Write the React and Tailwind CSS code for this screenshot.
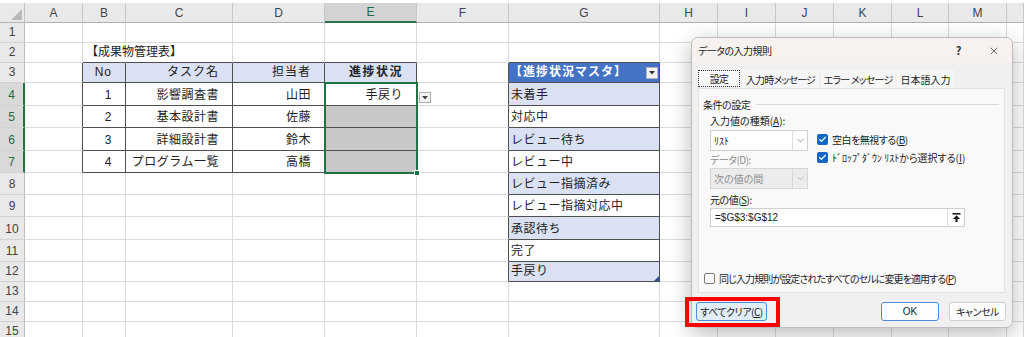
import React from "react";
import { ChevronDown, X, Check } from "lucide-react";

const GRID =
  "grid grid-cols-[25px_58px_43px_107px_92px_92px_92px_151px_58px_58px_58px_58px_57px_58px_1fr]";
const LETTERS = ["A", "B", "C", "D", "E", "F", "G", "H", "I", "J", "K", "L", "M", "N"];

const ROWS = [
  { n: 1, h: "h-[20px]" },
  { n: 2, h: "h-[20px]" },
  { n: 3, h: "h-[20px]" },
  { n: 4, h: "h-[23px]" },
  { n: 5, h: "h-[22px]" },
  { n: 6, h: "h-[23px]" },
  { n: 7, h: "h-[22px]" },
  { n: 8, h: "h-[22px]" },
  { n: 9, h: "h-[22px]" },
  { n: 10, h: "h-[23px]" },
  { n: 11, h: "h-[22px]" },
  { n: 12, h: "h-[20px]" },
  { n: 13, h: "h-[20px]" },
  { n: 14, h: "h-[20px]" },
  { n: 15, h: "h-[20px]" },
];

const TASKS = {
  4: ["1", "影響調査書", "山田", "手戻り"],
  5: ["2", "基本設計書", "佐藤", ""],
  6: ["3", "詳細設計書", "鈴木", ""],
  7: ["4", "プログラム一覧", "高橋", ""],
};

const STATUS = [
  "未着手",
  "対応中",
  "レビュー待ち",
  "レビュー中",
  "レビュー指摘済み",
  "レビュー指摘対応中",
  "承認待ち",
  "完了",
  "手戻り",
];

const inTable = (col, row) =>
  (["B", "C", "D", "E"].includes(col) && row >= 3 && row <= 7) ||
  (col === "G" && row >= 3 && row <= 12);

function DownTri({ color = "#444" }) {
  return (
    <svg width="6" height="4" viewBox="0 0 6 4">
      <path d="M0 0h6L3 3.5z" fill={color} />
    </svg>
  );
}

function Cell({ col, next, row }) {
  const darkR = inTable(col, row) || inTable(next, row);
  const darkB = inTable(col, row) || inTable(col, row + 1);
  let bg = "";
  let body = null;
  let align = "justify-start";

  if (col === "B" && row === 2) {
    body = <span className="pl-[3px]">【成果物管理表】</span>;
  }
  if (row === 3 && ["B", "C", "D", "E"].includes(col)) {
    bg = "bg-[#d9e1f2]";
    align = "justify-end pr-[13px]";
    const head = { B: "No", C: "タスク名", D: "担当者", E: "進捗状況" }[col];
    body =
      col === "E" ? (
        <span className="font-bold tracking-[1.5px]">{head}</span>
      ) : (
        <span className="tracking-[1px]">{head}</span>
      );
  }
  if (TASKS[row] && ["B", "C", "D", "E"].includes(col)) {
    const v = TASKS[row]["BCDE".indexOf(col)];
    align = "justify-end pr-[13px]";
    body = <span className="tracking-[0.5px]">{v}</span>;
    if (col === "E" && row > 4) bg = "bg-[#c8c8c8]";
  }
  if (col === "G" && row === 3) {
    bg = "bg-[#4472c4]";
    align = "justify-between pl-[1px] pr-[1px]";
    body = (
      <>
        <span className="font-bold text-white tracking-[1px]">【進捗状況マスタ】</span>
        <span className="mb-[1px] flex h-[12px] w-[12px] items-center justify-center border border-[#b3b3b3] bg-[#f4f4f4]">
          <DownTri color="#333" />
        </span>
      </>
    );
  }
  if (col === "G" && row >= 4 && row <= 12) {
    bg = row % 2 === 0 ? "bg-[#d9e1f2]" : "";
    body = <span className="pl-[2px] tracking-[0.5px]">{STATUS[row - 4]}</span>;
  }

  const borderR =
    col === "B" && row === 2
      ? "border-r-white"
      : darkR
      ? "border-r-[#4f4f4f]"
      : "border-r-[#dadada]";
  const borderB = darkB ? "border-b-[#4f4f4f]" : "border-b-[#dadada]";

  return (
    <div
      className={`relative flex items-end pb-[2px] leading-[16px] whitespace-nowrap border-r border-b ${borderR} ${borderB} ${bg} ${align}`}
    >
      {body}
      {col === "F" && row === 4 && (
        <span className="ml-[2px] flex h-[11px] w-[12px] items-center justify-center border border-[#ababab] bg-[#f3f3f3]">
          <DownTri />
        </span>
      )}
      {col === "E" && row === 4 && (
        <div className="pointer-events-none absolute left-[-1px] top-[-1px] z-10 h-[92px] w-[94px] border-2 border-[#217346]">
          <div className="absolute bottom-[-4px] right-[-4px] h-[6px] w-[6px] border border-white bg-[#217346]" />
        </div>
      )}
      {col === "G" && row === 12 && (
        <svg className="absolute bottom-0 right-0" width="5" height="5" viewBox="0 0 5 5">
          <path d="M5 0v5H0z" fill="#2f4f8f" />
        </svg>
      )}
    </div>
  );
}

function SheetRow({ n, h }) {
  const sel = n >= 4 && n <= 7;
  return (
    <div className={`${GRID} ${h}`}>
      <div
        className={`flex items-end justify-center pb-[2px] leading-[16px] border-b border-b-[#d2d2d2] ${
          sel
            ? "bg-[#d9d9d9] text-[#1e6b41] border-r-2 border-r-[#217346]"
            : "bg-[#e9e9e9] text-[#444] border-r border-r-[#bdbdbd]"
        }`}
      >
        {n}
      </div>
      {LETTERS.map((c, i) => (
        <Cell key={c} col={c} next={LETTERS[i + 1]} row={n} />
      ))}
    </div>
  );
}

function HeaderRow() {
  return (
    <div className={`${GRID} h-[20px] bg-[#e9e9e9]`}>
      <div className="relative border-r border-b border-r-[#c4c4c4] border-b-[#b1b1b1]">
        <svg className="absolute bottom-[2px] right-[2px]" width="11" height="11" viewBox="0 0 11 11">
          <path d="M11 0v11H0z" fill="#b9b9b9" />
        </svg>
      </div>
      {LETTERS.map((c) => (
        <div
          key={c}
          className={`flex items-center justify-center border-r border-r-[#c8c8c8] ${
            c === "E"
              ? "bg-[#d3d3d3] text-[#1e6b41] border-b-2 border-b-[#217346]"
              : "text-[#444] border-b border-b-[#b1b1b1]"
          }`}
        >
          {c === "N" ? "" : c}
        </div>
      ))}
    </div>
  );
}

function CheckBox({ on }) {
  return on ? (
    <span className="flex h-[11px] w-[11px] shrink-0 items-center justify-center rounded-[2px] bg-[#1667c4]">
      <Check size={9} strokeWidth={3} color="#fff" />
    </span>
  ) : (
    <span className="h-[11px] w-[11px] shrink-0 rounded-[2px] border border-[#7a7a7a] bg-[#fbfbfb]" />
  );
}

function Select({ value, disabled }) {
  return (
    <div
      className={`flex h-[21px] w-[98px] items-center border ${
        disabled ? "border-[#d6d6d6] bg-[#ececec] text-[#8c8c8c]" : "border-[#cfcfcf] bg-white"
      }`}
    >
      <span className="flex-1 pl-[3px] tracking-[0px]">{value}</span>
      <span
        className={`flex h-full w-[15px] items-center justify-center border-l ${
          disabled ? "border-l-[#d6d6d6]" : "border-l-[#dedede]"
        }`}
      >
        <ChevronDown size={11} strokeWidth={1.3} color={disabled ? "#8c8c8c" : "#555"} />
      </span>
    </div>
  );
}

function Dialog() {
  return (
    <div className="absolute left-[691px] top-[37px] flex h-[291px] w-[322px] flex-col overflow-hidden rounded-[7px] border border-[#bdbdbd] bg-[#f0f0f0] text-[10px] tracking-[-0.5px] text-[#1b1b1b] shadow-[0_6px_22px_rgba(0,0,0,0.28)] font-['Noto_Sans_CJK_JP',sans-serif] [font-feature-settings:'palt']">
      <div className="flex h-[25px] shrink-0 items-center bg-[#f7f2f0] pl-[6px] pr-[12px]">
        <span>データの入力規則</span>
        <span className="ml-auto mr-[27px] text-[11px] font-bold text-[#333]">?</span>
        <X size={12} strokeWidth={1.4} color="#333" />
      </div>

      <div className="flex gap-[2px] whitespace-nowrap pl-[6px] pt-[7px] tracking-[-0.8px]">
        <div className="flex h-[17px] w-[42px] items-center justify-center border border-dotted border-[#333] bg-[#f9f9f9]">
          設定
        </div>
        <div className="flex h-[18px] w-[77px] items-center justify-center bg-[#f6f6f6]">入力時メッセージ</div>
        <div className="flex h-[18px] w-[74px] items-center justify-center bg-[#f6f6f6]">エラー メッセージ</div>
        <div className="flex h-[18px] w-[57px] items-center justify-center bg-[#f6f6f6] tracking-[0px]">日本語入力</div>
      </div>

      <div className="ml-[6px] flex h-[205px] w-[307px] flex-col border border-[#e3e3e3] bg-[#f9f9f9]">
        <div className="mt-[8px] flex h-[14px] items-center pl-[4px] pr-[5px]">
          <span>条件の設定</span>
          <span className="ml-[6px] h-px flex-1 bg-[#d8d8d8]" />
        </div>
        <div className="mt-[3px] h-[14px] pl-[11px] leading-[14px] tracking-[0px]">
          入力値の種類(<span className="underline">A</span>):
        </div>
        <div className="mt-[2px] flex pl-[11px]">
          <div className="flex flex-col">
            <Select value="ﾘｽﾄ" />
            <div className="mt-[2px] h-[14px] leading-[14px] text-[#8c8c8c]">データ(D):</div>
            <div className="mt-[1px]">
              <Select value="次の値の間" disabled />
            </div>
          </div>
          <div className="ml-[9px] flex flex-col gap-[2px] pt-[1px]">
            <div className="flex h-[16px] items-center gap-[4px]">
              <CheckBox on />
              <span>
                空白を無視する(<span className="underline">B</span>)
              </span>
            </div>
            <div className="flex h-[16px] items-center gap-[4px]">
              <CheckBox on />
              <span className="tracking-[0px]">
                ﾄﾞﾛｯﾌﾟﾀﾞｳﾝ ﾘｽﾄから選択する(<span className="underline">I</span>)
              </span>
            </div>
          </div>
        </div>
        <div className="mt-[4px] h-[14px] pl-[11px] leading-[14px]">
          元の値(<span className="underline">S</span>):
        </div>
        <div className="ml-[11px] mt-[1px] flex h-[19px] w-[255px] items-center border border-[#cfcfcf] bg-white">
          <span className="flex-1 pl-[4px] tracking-[0px] font-['Liberation_Sans',sans-serif]">=$G$3:$G$12</span>
          <span className="flex h-full w-[17px] items-center justify-center border-l border-l-[#dedede]">
            <svg width="9" height="9" viewBox="0 0 9 9">
              <rect x="0.5" y="0" width="8" height="1.6" fill="#222" />
              <path d="M4.5 2.2L8.2 6H5.6v3H3.4V6H0.8z" fill="#222" />
            </svg>
          </span>
        </div>
        <div className="mb-[7px] mt-auto flex h-[14px] items-center gap-[4px] pl-[5px]">
          <CheckBox />
          <span className="tracking-[-0.9px]">
            同じ入力規則が設定されたすべてのセルに変更を適用する(<span className="underline">P</span>)
          </span>
        </div>
      </div>

      <div className="flex pl-[4px] pr-[6px] pt-[9px]">
        <div className="flex h-[19px] w-[71px] items-center justify-center rounded-[3px] border border-[#4a8fdc] bg-[#e0eefa]">
          すべてクリア(<span className="underline">C</span>)
        </div>
        <div className="ml-auto flex h-[19px] w-[58px] items-center justify-center rounded-[3px] border border-[#4a8fdc] bg-[#fdfdfd] tracking-[0px] font-['Liberation_Sans',sans-serif]">
          OK
        </div>
        <div className="ml-[10px] flex h-[19px] w-[57px] items-center justify-center rounded-[3px] border border-[#d0d0d0] bg-[#fdfdfd]">
          キャンセル
        </div>
      </div>
    </div>
  );
}

export default function App() {
  return (
    <div className="relative h-[337px] w-[1024px] overflow-hidden bg-white text-[12px] text-[#222] font-['Liberation_Sans','Noto_Sans_CJK_JP',sans-serif]">
      <div className="h-[3px] bg-white" />
      <HeaderRow />
      {ROWS.map((r) => (
        <SheetRow key={r.n} n={r.n} h={r.h} />
      ))}
      <Dialog />
      <div className="pointer-events-none absolute left-[685px] top-[297px] h-[30px] w-[95px] border-4 border-[#ff0000]" />
    </div>
  );
}
